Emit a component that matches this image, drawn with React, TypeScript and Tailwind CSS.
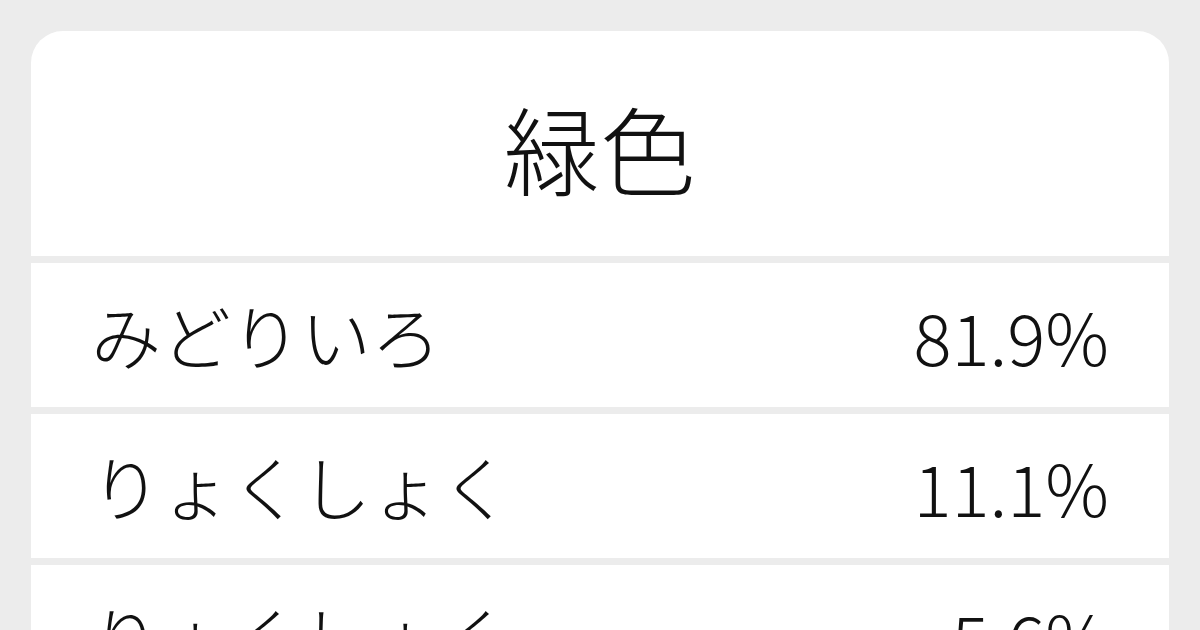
const rows = [
  { reading: "みどりいろ", share: "81.9%" },
  { reading: "りょくしょく", share: "11.1%" },
  { reading: "りょくしょく", share: "5.6%" },
];

export default function App() {
  return (
    <div className="h-[630px] w-[1200px] overflow-hidden bg-[#ececec] px-[31px] pt-[31px] font-['Noto_Sans_CJK_JP',sans-serif] font-light text-[#111]">
      <div className="overflow-hidden rounded-[32px] bg-white">
        <div className="flex h-[225px] items-center justify-center pt-[6px]">
          <h1 className="text-[96px] leading-none">緑色</h1>
        </div>
        {rows.map((row, i) => (
          <div
            key={i}
            className="flex h-[151px] items-center justify-between border-t-[7px] border-[#ececec] pl-[60px] pr-[60px] text-[70px] leading-none"
          >
            <span>{row.reading}</span>
            <span className="text-[71px]">{row.share}</span>
          </div>
        ))}
      </div>
    </div>
  );
}
